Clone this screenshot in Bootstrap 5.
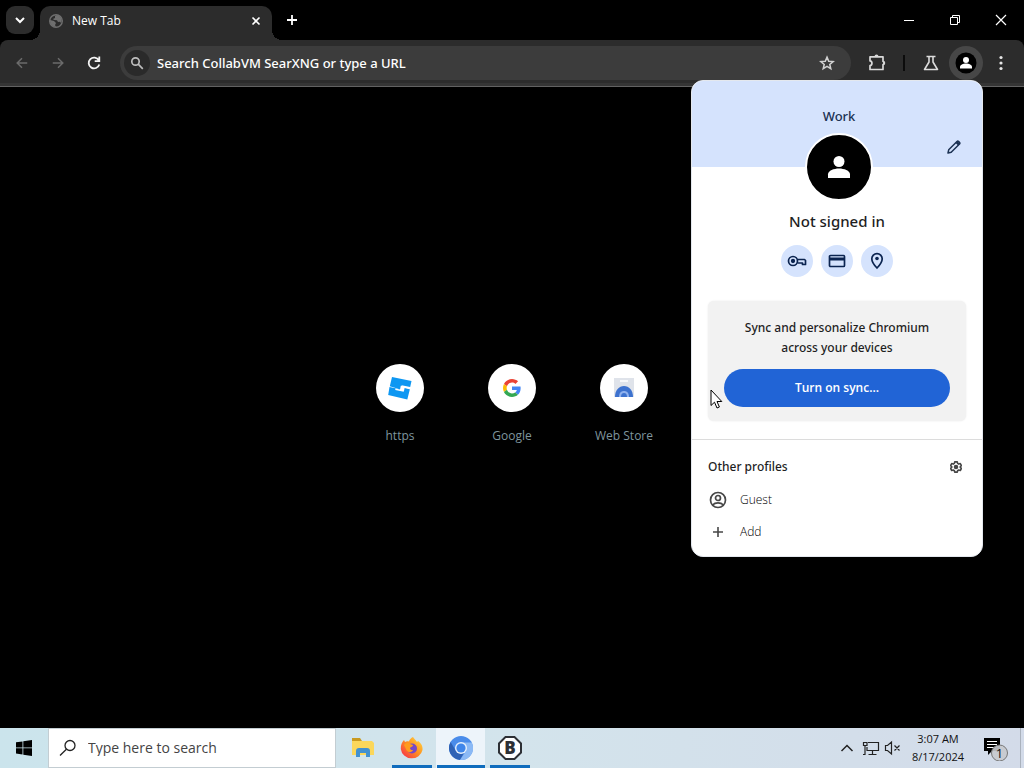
<!DOCTYPE html>
<html lang="en">
<head>
<meta charset="utf-8">
<meta name="viewport" content="width=device-width, initial-scale=1">
<title>New Tab</title>
<link href="https://cdn.jsdelivr.net/npm/bootstrap@5.3.0/dist/css/bootstrap.min.css" rel="stylesheet">
<style>
  body { font-family: "Open Sans", "Noto Sans", sans-serif; font-size: 12px; line-height: 16px; background: #000; color: #fff; }
  svg { display: block; flex: none; }
  button { font: inherit; }
  .plain-btn { border: 0; background: none; padding: 0; color: inherit; display: flex; align-items: center; justify-content: center; flex: none; }

  /* tab strip */
  .tab-strip { height: 40px; padding-left: 6px; }
  .tab-search { width: 28px; height: 28px; border-radius: 9px; background: #2c2c2c; }
  .page-tab { position: relative; width: 232px; height: 34px; margin-top: 6px; margin-left: 6px; background: #2c2c2c; border-radius: 10px 10px 0 0; padding: 0 8px 5px; }
  .page-tab::before, .page-tab::after { content: ""; position: absolute; bottom: 0; width: 10px; height: 10px; }
  .page-tab::before { left: -10px; background: radial-gradient(circle at 0 0, transparent 10px, #2c2c2c 10px); }
  .page-tab::after { right: -10px; background: radial-gradient(circle at 100% 0, transparent 10px, #2c2c2c 10px); }
  .new-tab { width: 40px; height: 36px; }
  .win-btn { width: 46px; height: 40px; }

  /* toolbar */
  .tool-bar { height: 47px; background: #2c2c2c; border-radius: 8px 8px 0 0; border-bottom: 1px solid #626262; box-shadow: inset 0 -3px #353535; padding: 0 5px 1px 4px; }
  .nav-btn { width: 36px; height: 36px; }
  .address { height: 34px; border-radius: 17px; background: #3c3c3c; margin-left: 8px; padding: 0 15px 0 4px; }
  .engine { width: 26px; height: 26px; border-radius: 50%; background: #2a2a2a; }
  .address input { background: none; border: 0; outline: 0; padding: 0; margin-left: 7px; color: #fff; font-family: "Noto Sans", sans-serif; font-size: 13px; font-weight: 500; }
  .address input::placeholder { color: #fff; opacity: 1; }
  .avatar-btn { width: 34px; height: 34px; border-radius: 50%; background: #474747; }
  .split { width: 2px; height: 16px; background: #0c0c0c; }

  /* shortcuts */
  .shortcuts { padding-bottom: 8px; }
  .shortcut { width: 112px; color: #7f959e; text-decoration: none; }
  .disc { width: 48px; height: 48px; border-radius: 50%; background: #fff; }

  /* profile menu */
  .profile-menu { position: absolute; top: 80px; right: 41px; width: 292px; z-index: 5; background: #fff; color: #1f1f1f; border-radius: 12px; overflow: hidden; border: 1px solid #e4e8ee; }
  .menu-head, .menu-title, .sync-text, .others-head { font-family: "Noto Sans", sans-serif; font-weight: 500; }
  .menu-head { height: 86px; background: #d5e3fd; color: #1c3253; padding-top: 27px; padding-left: 4px; font-size: 13px; position: relative; }
  .edit-btn { position: absolute; right: 20px; bottom: 12px; width: 16px; height: 16px; }
  .big-avatar { width: 68px; height: 68px; border-radius: 50%; border: 2px solid #fff; background: #000; margin: -34px auto 0; position: relative; left: 2px; }
  .menu-title { font-size: 15px; line-height: 24px; margin: 8px 0 12px; }
  .round-btn { width: 32px; height: 32px; border-radius: 50%; background: #d5e3fd; color: #0b2450; }
  .sync-box { margin: 24px 16px 0; padding: 17px 16px 14px; background: #f2f2f2; border-radius: 6px; line-height: 20px; box-shadow: 0 0 2px #e9e9e9; }
  .sync-btn { height: 38px; border-radius: 19px; background: #2164d6; color: #fff; border: 0; font-weight: 600; margin-top: 11px; }
  .others { border-top: 1px solid #dcdcdc; margin-top: 18px; padding: 19px 16px 8px; }
  .others-head { margin-bottom: 9px; }
  .menu-row { height: 32px; font-weight: 300; color: #000; }
  .pointer { position: absolute; left: 18px; top: 308px; }

  /* taskbar */
  .task-bar { height: 40px; background: linear-gradient(90deg, #cbe4ec, #d3e4ec 50%, #d3dbe9); color: #111; }
  .start-btn { width: 48px; height: 40px; color: #000; }
  .task-search { width: 288px; height: 40px; background: #fff; border: 1px solid #c3cdd2; padding-left: 10px; }
  .task-search input { border: 0; outline: 0; padding: 0; margin-left: 11px; background: none; font-size: 14px; }
  .task-search input::placeholder { color: #444; opacity: 1; }
  .app-list { margin-left: 2px; }
  .app-btn { width: 49px; height: 40px; }
  .app-open { background: linear-gradient(#0f6cbd, #0f6cbd) center bottom / 40px 3px no-repeat; }
  .app-live { background: linear-gradient(#0f6cbd, #0f6cbd) center bottom / 48px 3px no-repeat, #edf4fa; }
  .clock { width: 74px; line-height: 18px; font-size: 11px; }
  .desk-edge { width: 4px; height: 40px; margin-left: 11px; border-left: 1px solid #aab2bd; }
</style>
</head>
<body>
<div class="d-flex flex-column vh-100 overflow-hidden position-relative">

  <header class="tab-strip d-flex align-items-center">
    <button class="plain-btn tab-search" aria-label="Search tabs">
      <svg width="10" height="7" viewBox="0 0 10 7" fill="none" stroke="#fff" stroke-width="2"><path d="M1 1l4 4 4-4"/></svg>
    </button>
    <div class="page-tab d-flex align-items-center">
      <svg width="16" height="16" viewBox="0 0 16 16"><circle cx="8" cy="8" r="6.3" fill="none" stroke="#6f6f6f" stroke-width="1.4"/><path fill="#6f6f6f" d="M2 7l4 1 2 2-1 2 1 2C4 14 2 11 2 7zM9 2L7 3v2L5 6l1 1 3 .3 1 1.7 2-.3 1 1.3c2-4-.5-7-4-8z"/></svg>
      <span class="ms-2 flex-grow-1">New Tab</span>
      <button class="plain-btn" aria-label="Close tab"><svg width="16" height="16" viewBox="0 0 16 16" stroke="#fff" stroke-width="1.6"><path d="M4.500 4.500l7 7m0-7l-7 7"/></svg></button>
    </div>
    <button class="plain-btn new-tab" aria-label="New tab"><svg width="12" height="12" viewBox="0 0 12 12" stroke="#fff" stroke-width="1.8"><path d="M6 1v10M1 6h10"/></svg></button>
    <div class="ms-auto d-flex">
      <button class="plain-btn win-btn" aria-label="Minimize"><svg width="12" height="12" viewBox="0 0 12 12" stroke="#fff"><path d="M1 6.500h10"/></svg></button>
      <button class="plain-btn win-btn" aria-label="Restore"><svg width="12" height="12" viewBox="0 0 12 12" stroke="#fff" fill="none"><path d="M1.500 3.500h7v7h-7zM3.500 3.500v-2h7v7h-2"/></svg></button>
      <button class="plain-btn win-btn" aria-label="Close"><svg width="12" height="12" viewBox="0 0 12 12" stroke="#fff" stroke-width="1.200"><path d="M1 1l10 10m0-10L1 11"/></svg></button>
    </div>
  </header>

  <nav class="tool-bar d-flex align-items-center" aria-label="Toolbar">
    <button class="plain-btn nav-btn" aria-label="Back"><svg width="14" height="14" viewBox="0 0 16 16" fill="none" stroke="#6b6b6b" stroke-width="1.700"><path d="M14 8H3M8 2.500L2.500 8 8 13.500"/></svg></button>
    <button class="plain-btn nav-btn" aria-label="Forward"><svg width="14" height="14" viewBox="0 0 16 16" fill="none" stroke="#6b6b6b" stroke-width="1.700"><path d="M2 8h11M8 2.500L13.500 8 8 13.500"/></svg></button>
    <button class="plain-btn nav-btn" aria-label="Reload"><svg width="16" height="16" viewBox="0 0 16 16" fill="none" stroke="#f4f4f4" stroke-width="1.800"><path d="M12.800 5.300A5.400 5.400 0 1 0 13.300 9.500M13.300 1.500v4.600H8.700"/></svg></button>
    <form class="address d-flex align-items-center flex-grow-1">
      <span class="engine d-flex align-items-center justify-content-center"><svg width="14" height="14" viewBox="0 0 14 14" fill="none" stroke="#bdbdbd" stroke-width="1.700"><circle cx="5.500" cy="5.500" r="3.700"/><path d="M8.200 8.200l4.600 4.600"/></svg></span>
      <input class="flex-grow-1" type="text" aria-label="Address" placeholder="Search CollabVM SearXNG or type a URL">
      <button type="button" class="plain-btn" aria-label="Bookmark"><svg width="18" height="18" viewBox="0 0 20 20" fill="none" stroke="#d2d2d2" stroke-width="1.700"><path d="M10 3.500l1.900 4.500 4.900.4-3.700 3.200 1.100 4.800-4.200-2.600-4.200 2.600 1.100-4.800-3.700-3.200 4.900-.4z"/></svg></button>
    </form>
    <button class="plain-btn nav-btn mx-2" aria-label="Extensions"><svg width="20" height="20" viewBox="0 0 20 20"><path fill="none" stroke="#d9d9d9" stroke-width="1.700" stroke-linejoin="round" d="M3 3.800h13v4.700c1.800.3 1.800 2.700 0 3v5H3v-3.800c2.600-.3 2.600-4.500 0-4.800z"/><path fill="#d9d9d9" d="M7.500 3.500a2 2 0 0 1 4 0zM16.200 8a2 2 0 0 1 0 4z"/></svg></button>
    <span class="split"></span>
    <button class="plain-btn nav-btn ms-2" aria-label="Experiments"><svg width="18" height="18" viewBox="0 0 18 18" fill="none" stroke="#dcdcdc" stroke-width="1.600" stroke-linejoin="round"><path d="M4.500 2.500h9M7 2.500v5.500L2.500 15.500h13L11 8V2.500"/></svg></button>
    <button class="plain-btn avatar-btn" aria-label="Profile"><svg width="22" height="22" viewBox="0 0 22 22"><circle cx="11" cy="11" r="10.500" fill="#000"/><circle cx="11" cy="8" r="3" fill="#fff"/><path fill="#fff" d="M5 16.500v-1.500c0-2 3-3.500 6-3.500s6 1.500 6 3.500v1.500z"/></svg></button>
    <button class="plain-btn nav-btn" aria-label="Menu"><svg width="4" height="16" viewBox="0 0 4 16" fill="#e6e6e6"><circle cx="2" cy="2.500" r="1.600"/><circle cx="2" cy="8" r="1.600"/><circle cx="2" cy="13.500" r="1.600"/></svg></button>
  </nav>

  <main class="shortcuts flex-grow-1 d-flex align-items-center justify-content-center">
    <a class="shortcut d-flex flex-column align-items-center" href="#"><span class="disc d-flex align-items-center justify-content-center mb-3"><svg width="24" height="24" viewBox="0 0 24 24"><path fill="#0d97f2" d="M4 1l19.500 4-1.300 6-8.500-1.800-.5 2.200 3.800.8-.5 2.600L1.800 10.200z"/><path fill="#0d97f2" d="M1.500 11l15 3.300.5-2.500 5 1L19.300 23.500.2 19z"/><path fill="#fff" d="M7.500 12.500l4.500 1 .8-3.700 10 2.200-.3 1.400-6-1.300-.8 3.600-8.500-1.800z"/></svg></span>https</a>
    <a class="shortcut d-flex flex-column align-items-center" href="#"><span class="disc d-flex align-items-center justify-content-center mb-3"><svg width="18" height="18" viewBox="0 0 48 48"><path fill="#EA4335" d="M24 9.500c3.500 0 6.700 1.200 9.200 3.600l6.900-6.900C35.900 2.400 30.500 0 24 0 14.600 0 6.500 5.400 2.600 13.200l8 6.200C12.400 13.700 17.700 9.500 24 9.500z"/><path fill="#4285F4" d="M47 24.600c0-1.600-.2-3.100-.4-4.600H24v9h12.900c-.6 3-2.200 5.500-4.700 7.200l7.700 6C44.400 38 47 31.800 47 24.600z"/><path fill="#FBBC05" d="M10.500 28.600c-.5-1.500-.8-3-.8-4.600s.3-3.100.8-4.600l-8-6.200C.9 16.500 0 20.100 0 24s.9 7.500 2.600 10.800z"/><path fill="#34A853" d="M24 48c6.500 0 11.900-2.100 15.900-5.800l-7.700-6c-2.200 1.500-4.900 2.300-8.200 2.300-6.300 0-11.600-4.200-13.500-9.900l-8 6.200C6.500 42.600 14.600 48 24 48z"/></svg></span>Google</a>
    <a class="shortcut d-flex flex-column align-items-center" href="#"><span class="disc d-flex align-items-center justify-content-center mb-3"><svg width="22" height="20" viewBox="0 0 22 20"><path fill="#dfe3ea" d="M1 0h20v19H1z"/><path fill="#f7f8fa" d="M7 2h8v2H7z"/><path fill="#3d72cf" d="M2 19c0-7 4-11 9-11s9 4 9 11z"/><path fill="#8fb1ee" d="M6 19c0-4 2-6 5-6s5 2 5 6z"/><path fill="#3d72cf" d="M8 19c0-2.500 1-4 3-4s3 1.500 3 4z"/></svg></span>Web Store</a>
  </main>

  <section class="profile-menu" aria-label="Profile">
    <div class="menu-head text-center"><span>Work</span>
      <button class="plain-btn edit-btn" aria-label="Edit"><svg width="16" height="16" viewBox="0 0 16 16" fill="none" stroke="#1c3253" stroke-width="1.500" stroke-linejoin="round"><path d="M2 14l.7-3.200L11 2.500q.8-.8 1.600 0l.9.9q.8.8 0 1.600L5.200 13.300z"/><path d="M10.500 3L13 5.500" stroke-width="2.500"/></svg></button>
    </div>
    <div class="big-avatar d-flex align-items-center justify-content-center"><svg width="24" height="24" viewBox="0 0 24 24" fill="#fff"><circle cx="12" cy="6.500" r="5.500"/><path d="M1 23v-3.500C1 15.500 7 13.500 12 13.500s11 2 11 6V23z"/></svg></div>
    <h1 class="menu-title text-center">Not signed in</h1>
    <div class="d-flex justify-content-center gap-2">
      <button class="plain-btn round-btn" aria-label="Passwords"><svg width="20" height="12" viewBox="0 0 20 12" fill="none" stroke="currentColor" stroke-width="1.700" stroke-linejoin="round"><circle cx="6" cy="6" r="4.500"/><circle cx="6" cy="6" r="1.300" fill="currentColor"/><path d="M10.500 4.500H17.500l1 1v4h-3V8h-5"/></svg></button>
      <button class="plain-btn round-btn" aria-label="Payment methods"><svg width="18" height="14" viewBox="0 0 18 14" fill="none" stroke="currentColor" stroke-width="1.700"><rect x="1.500" y="1.500" width="15" height="11" rx="1"/><path d="M1.500 5h15" stroke-width="3"/></svg></button>
      <button class="plain-btn round-btn" aria-label="Addresses"><svg width="14" height="18" viewBox="0 0 14 18" fill="none" stroke="currentColor" stroke-width="1.700"><path d="M7 16C3.500 12.500 1.800 9.500 1.800 6.800a5.200 5.200 0 0 1 10.400 0C12.200 9.500 10.500 12.500 7 16z"/><circle cx="7" cy="6.500" r="1.800" fill="currentColor" stroke="none"/></svg></button>
    </div>
    <div class="sync-box text-center">
      <div class="sync-text">Sync and personalize Chromium<br>across your devices</div>
      <button class="sync-btn w-100 d-block">Turn on sync...</button>
    </div>
    <div class="others">
      <div class="others-head d-flex justify-content-between align-items-center"><span>Other profiles</span>
        <button class="plain-btn me-1" aria-label="Manage profiles"><svg width="12" height="14" viewBox="0 0 14 14" fill="none" stroke="#474747" stroke-width="1.900"><path stroke-linejoin="round" d="M5.500 1h3l.4 1.800 1.300.8 1.800-.6 1.300 2.400L12 6.500v1l1.300 1.200-1.300 2.400-1.800-.6-1.300.8L8.500 13h-3l-.4-1.700-1.300-.8-1.800.6-1.300-2.400L2 7.500v-1L.7 5.400 2 3l1.800.6 1.300-.8z"/><circle cx="7" cy="7" r="1.700" fill="#474747"/></svg></button></div>
      <button class="plain-btn menu-row w-100 justify-content-start"><svg width="20" height="18" viewBox="0 0 20 18" fill="none" stroke="#474747" stroke-width="1.700"><circle cx="10" cy="9" r="7.500"/><circle cx="10" cy="7" r="2.500"/><path d="M4.500 14c1.500-1.500 3.500-2.200 5.500-2.200s4 .7 5.500 2.200"/></svg><span class="ms-2 ps-1">Guest</span></button>
      <button class="plain-btn menu-row w-100 justify-content-start"><svg width="20" height="12" viewBox="0 0 20 12" stroke="#474747" stroke-width="1.600"><path d="M10 1v10M5 6h10"/></svg><span class="ms-2 ps-1">Add</span></button>
    </div>
    <svg class="pointer" width="13" height="20" viewBox="0 0 13 20"><path fill="#fff" stroke="#000" stroke-width="1" d="M1 1v15.500l3.500-3.300L7 19l2.400-1-2.400-5.500h4.800z"/></svg>
  </section>

  <footer class="task-bar d-flex align-items-center flex-shrink-0">
    <button class="plain-btn start-btn" aria-label="Start"><svg width="16" height="16" viewBox="0 0 16 16"><path d="M0 2.300l6.500-.9v6.100H0zM7.300 1.300L16 0v7.500H7.300zM0 8.300h6.500v6.200L0 13.600zM7.300 8.300H16V16l-8.700-1.300z"/></svg></button>
    <form class="task-search d-flex align-items-center"><svg width="18" height="18" viewBox="0 0 18 18" fill="none" stroke="#222" stroke-width="1.300"><circle cx="11" cy="6.500" r="5"/><path d="M7.400 10.200L1 16.500"/></svg><input class="flex-grow-1" type="text" aria-label="Search Windows" placeholder="Type here to search"></form>
    <div class="app-list d-flex">
      <button class="plain-btn app-btn" aria-label="File Explorer"><svg width="24" height="22" viewBox="0 0 24 22"><path fill="#c99a20" d="M1 1h8l2 3H1z"/><path fill="#fbd75b" d="M1 4h20l2 2v12H1z"/><path fill="#4291cf" d="M5 20v-6q0-3 3-3h8q3 0 3 3v6h-4v-4H9v4z"/></svg></button>
      <button class="plain-btn app-btn app-open" aria-label="Firefox"><svg width="24" height="24" viewBox="0 0 24 24"><defs><linearGradient id="fx" x1="1" y1="0" x2="0" y2="1"><stop offset="0" stop-color="#ffe14a"/><stop offset=".45" stop-color="#ff9420"/><stop offset="1" stop-color="#f5244f"/></linearGradient></defs><path fill="url(#fx)" d="M13 1c1 2 3 3 4 5l1-1c3 2 5 5 4.500 9A11 10.500 0 0 1 .8 13C.6 9 2 6 4 4l1 2c1.500-1 3-.6 4-.5C9.500 3.500 11 2 13 1z"/><circle cx="12" cy="12.500" r="5" fill="#7548c9"/><path fill="#ff9b1c" d="M4 9c2-3 5-2 6-1l3 1c0 2-3 2-3 3s1 2.500 3 2c-1 3-6 3-7-1z"/></svg></button>
      <button class="plain-btn app-btn app-live" aria-label="Chromium"><svg width="24" height="24" viewBox="0 0 24 24"><circle cx="12" cy="12" r="12" fill="#4a8cea"/><path fill="#2f62b5" d="M1.600 6A12 12 0 0 0 11 24l5-9H7z"/><path fill="#8bb9f5" d="M12 6.500h10.700A12 12 0 0 1 11 24l6-9z"/><circle cx="12" cy="12" r="6" fill="#e6f0fc"/><circle cx="12" cy="12" r="4.600" fill="#3f86ea"/></svg></button>
      <button class="plain-btn app-btn app-open" aria-label="B"><svg width="24" height="24" viewBox="0 0 24 24"><path fill="#fff" stroke="#2d3035" stroke-width="2" d="M7.500 1h9L23 7.500v9L16.500 23h-9L1 16.500v-9z"/><text x="12" y="18" font-size="17" font-weight="800" text-anchor="middle" fill="#2d3035">B</text></svg></button>
    </div>
    <div class="ms-auto d-flex align-items-center">
      <button class="plain-btn" aria-label="Show hidden icons"><svg width="14" height="8" viewBox="0 0 14 8" fill="none" stroke="#222" stroke-width="1.500"><path d="M1.500 7L7 1.500 12.500 7"/></svg></button>
      <svg class="ms-2" width="18" height="16" viewBox="0 0 18 16" fill="none" stroke="#222" stroke-width="1.200"><path d="M6 2.500h10.500v8H5V7M10.500 10.500v4M6.500 14.500h8M1.500 2.500H5v3H1.500zM3 5.500v9H1"/></svg>
      <svg class="ms-1" width="17" height="16" viewBox="0 0 17 16" fill="none" stroke="#222" stroke-width="1.200"><path d="M1.500 5.500h2l4-3.500v12l-4-3.500h-2zM10.500 5.500l5 5m0-5l-5 5"/></svg>
      <div class="clock text-center">3:07 AM<br>8/17/2024</div>
      <button class="plain-btn ms-2" aria-label="Notifications"><svg width="26" height="26" viewBox="0 0 26 26"><path fill="#000" d="M1 3h16v13H9l-4 4v-4H1z"/><path stroke="#fff" stroke-width="1.200" d="M4 6.500h10M4 9.500h10M4 12.500h7"/><circle cx="16.500" cy="18" r="8" fill="#c6c9ce" fill-opacity=".9" stroke="#777"/><text x="16.500" y="23" font-size="13" text-anchor="middle" fill="#111">1</text></svg></button>
      <span class="desk-edge"></span>
    </div>
  </footer>
</div>
<script src="https://cdn.jsdelivr.net/npm/bootstrap@5.3.0/dist/js/bootstrap.bundle.min.js"></script>
</body>
</html>
